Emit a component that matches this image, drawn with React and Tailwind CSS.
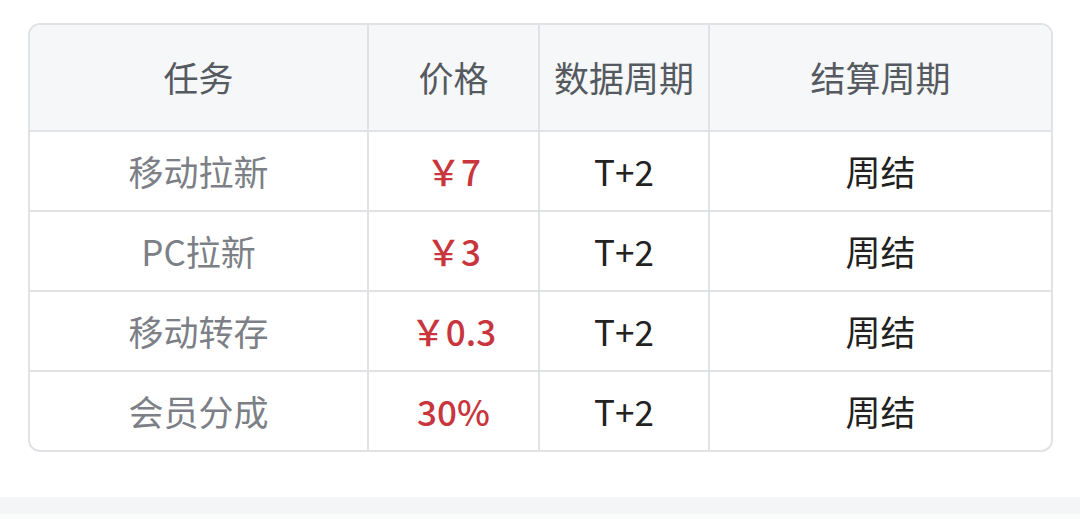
export default function App() {
  const rows = [
    ["移动拉新", "￥7", "T+2", "周结"],
    ["PC拉新", "￥3", "T+2", "周结"],
    ["移动转存", "￥0.3", "T+2", "周结"],
    ["会员分成", "30%", "T+2", "周结"],
  ];
  const font = { fontFamily: '"Noto Sans CJK SC", "Noto Sans", sans-serif' };
  return (
    <div className="w-[1080px] h-[519px] bg-white flex flex-col" style={font}>
      <div className="pt-[23px] pl-[28px] h-[497px]">
        <div className="w-[1025px] rounded-[12px] border-2 border-[#e0e2e6] overflow-hidden">
          <div className="grid grid-cols-[339px_171px_170px_341px] h-[105px] bg-[#f6f7f9] text-[35px] text-[#555a60]">
            <div className="flex items-center justify-center border-r-2 border-[#e0e2e6]">任务</div>
            <div className="flex items-center justify-center border-r-2 border-[#e0e2e6]">价格</div>
            <div className="flex items-center justify-center border-r-2 border-[#e0e2e6]">数据周期</div>
            <div className="flex items-center justify-center">结算周期</div>
          </div>
          {rows.map((r, i) => (
            <div
              key={i}
              className="grid grid-cols-[339px_171px_170px_341px] h-[80px] border-t-2 border-[#e0e2e6] text-[35px]"
            >
              <div className="flex items-center justify-center border-r-2 border-[#e0e2e6] text-[#7c8086]">{r[0]}</div>
              <div className="flex items-center justify-center border-r-2 border-[#e0e2e6] text-[#c8353d] font-medium">{r[1]}</div>
              <div className="flex items-center justify-center border-r-2 border-[#e0e2e6] text-[#222222]">{r[2]}</div>
              <div className="flex items-center justify-center text-[#222222]">{r[3]}</div>
            </div>
          ))}
        </div>
      </div>
      <div className="h-[17px] bg-[#f4f5f6]"></div>
      <div className="flex-1 bg-[#fafbfb]"></div>
    </div>
  );
}
